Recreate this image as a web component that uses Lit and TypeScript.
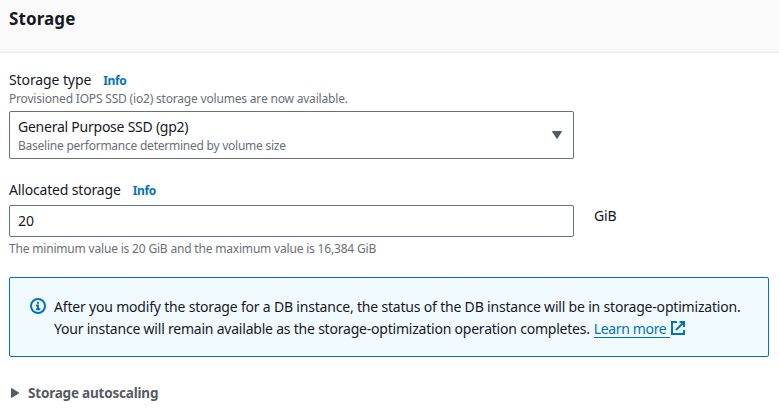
import { LitElement, html, css } from "lit";
import { customElement } from "lit/decorators.js";

@customElement("app-root")
export class AppRoot extends LitElement {
  static styles = css`
    :host {
      display: block;
      height: 414px;
      overflow: hidden;
      background: #fff;
      color: #16191f;
      font: 14px/22px "Noto Sans", "Open Sans", sans-serif;
      white-space: nowrap;
    }
    * { box-sizing: border-box; }
    .header {
      height: 53px;
      padding: 8px 9px 0;
      background: #fafafa;
      border-bottom: 1px solid #eaeded;
    }
    h2 { margin: 0; font-size: 17px; line-height: 22px; font-weight: 700; letter-spacing: 0.1px; }
    .body { padding: 16px 10px 0 9px; }
    .label { display: flex; height: 22px; gap: 12px; letter-spacing: -0.1px; }
    .info { color: #0073bb; font-size: 12px; line-height: 24px; font-weight: 700; letter-spacing: -0.35px; text-decoration: none; }
    .hint { height: 20px; font-size: 12px; line-height: 16px; color: #687078; letter-spacing: -0.185px; }
    .select {
      display: flex;
      align-items: center;
      justify-content: space-between;
      width: 565px;
      height: 48px;
      padding: 0 11px 0 8px;
      border: 1px solid #687078;
      border-radius: 2px;
    }
    .option { display: flex; flex-direction: column; letter-spacing: -0.24px; }
    .desc { font-size: 12px; line-height: 16px; color: #687078; }
    .select svg { display: block; }
    .allocated { margin-top: 20px; letter-spacing: -0.17px; }
    .row { display: flex; gap: 20px; margin-top: 4px; }
    .input {
      width: 565px;
      height: 32px;
      padding: 4px 8px;
      border: 1px solid #687078;
      border-radius: 2px;
    }
    .unit { letter-spacing: -0.2px; }
    .below { margin-top: 4px; }
    .alert {
      display: flex;
      gap: 8px;
      height: 80px;
      margin-top: 16px;
      padding: 18px 20px;
      border: 1px solid #0073bb;
      border-radius: 2px;
      background: #f1faff;
      letter-spacing: -0.19px;
    }
    .alert svg { display: block; flex: none; }
    .alert .status { margin-top: 2px; }
    .line { display: flex; }
    .second { letter-spacing: -0.215px; }
    .link { color: #0073bb; display: flex; margin-left: 4px; text-decoration: none; letter-spacing: -0.35px; }
    .link span { height: 20px; padding-right: 4px; border-bottom: 1px solid #0073bb; }
    .link svg { margin: 3px 0 0 1px; }
    .expander { display: flex; align-items: center; gap: 8px; height: 22px; margin-top: 25px; padding-left: 2px; color: #545b64; font-size: 13.5px; font-weight: 700; letter-spacing: -0.2px; }
  `;

  render() {
    return html`
      <header class="header"><h2>Storage</h2></header>
      <main class="body">
        <div class="label"><span>Storage type</span><a class="info">Info</a></div>
        <div class="hint">Provisioned IOPS SSD (io2) storage volumes are now available.</div>
        <div class="select">
          <div class="option">
            <span>General Purpose SSD (gp2)</span>
            <span class="desc">Baseline performance determined by volume size</span>
          </div>
          <svg width="10" height="8" viewBox="0 0 10 8"><path d="M0.5 0.5h9L5 7.5z" fill="#545b64" stroke="#545b64" stroke-linejoin="round"/></svg>
        </div>
        <div class="label allocated"><span>Allocated storage</span><a class="info">Info</a></div>
        <div class="row"><div class="input">20</div><span class="unit">GiB</span></div>
        <div class="hint below">The minimum value is 20 GiB and the maximum value is 16,384 GiB</div>
        <section class="alert">
          <svg class="status" width="16" height="16" viewBox="0 0 16 16" fill="none" stroke="#0073bb" stroke-width="2">
            <circle cx="8" cy="8" r="7"/><path d="M6 7.5h2V11M6 11.2h4.3M7 4.8h2"/>
          </svg>
          <div>
            <div class="line"><span>After you modify the storage for a DB instance, the status of the DB instance will be in storage-optimization.</span></div>
            <div class="line"><span class="second">Your instance will remain available as the storage-optimization operation completes.</span><a class="link"><span>Learn more</span>
              <svg width="14" height="14" viewBox="0 0 14 14" fill="none" stroke="#0073bb" stroke-width="2"><path d="M6 1H1v12h12V9M8.5 1H13v5M13 1L5 9"/></svg></a></div>
          </div>
        </section>
        <div class="expander">
          <svg width="9" height="10" viewBox="0 0 9 10"><path d="M0.5 0.5v9L7.8 5z" fill="#545b64" stroke="#545b64" stroke-linejoin="round"/></svg>
          <span>Storage autoscaling</span>
        </div>
      </main>
    `;
  }
}
